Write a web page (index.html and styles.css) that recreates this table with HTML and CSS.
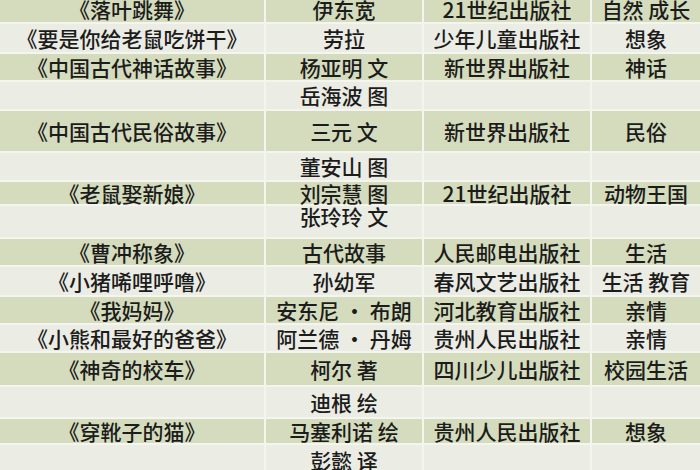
FILE: index.html
```html
<!DOCTYPE html>
<html lang="zh">
<head>
<meta charset="utf-8">
<title>绘本书单</title>
<link rel="stylesheet" href="styles.css">
</head>
<body>
<div class="sheet">
  <div class="row dark"><div class="c">《落叶跳舞》</div><div class="c">伊东宽</div><div class="c">21世纪出版社</div><div class="c">自然 成长</div></div>
  <div class="row light"><div class="c">《要是你给老鼠吃饼干》</div><div class="c">劳拉</div><div class="c">少年儿童出版社</div><div class="c">想象</div></div>
  <div class="row dark"><div class="c">《中国古代神话故事》</div><div class="c">杨亚明 文</div><div class="c">新世界出版社</div><div class="c">神话</div></div>
  <div class="row light"><div class="c"></div><div class="c">岳海波 图</div><div class="c"></div><div class="c"></div></div>
  <div class="row dark"><div class="c">《中国古代民俗故事》</div><div class="c">三元 文</div><div class="c">新世界出版社</div><div class="c">民俗</div></div>
  <div class="row light"><div class="c"></div><div class="c">董安山 图</div><div class="c"></div><div class="c"></div></div>
  <div class="row dark"><div class="c">《老鼠娶新娘》</div><div class="c">刘宗慧 图</div><div class="c">21世纪出版社</div><div class="c">动物王国</div></div>
  <div class="row light raised"><div class="c"></div><div class="c">张玲玲 文</div><div class="c"></div><div class="c"></div></div>
  <div class="row dark"><div class="c">《曹冲称象》</div><div class="c">古代故事</div><div class="c">人民邮电出版社</div><div class="c">生活</div></div>
  <div class="row light"><div class="c">《小猪唏哩呼噜》</div><div class="c">孙幼军</div><div class="c">春风文艺出版社</div><div class="c">生活 教育</div></div>
  <div class="row dark"><div class="c">《我妈妈》</div><div class="c">安东尼 · 布朗</div><div class="c">河北教育出版社</div><div class="c">亲情</div></div>
  <div class="row light"><div class="c">《小熊和最好的爸爸》</div><div class="c">阿兰德 · 丹姆</div><div class="c">贵州人民出版社</div><div class="c">亲情</div></div>
  <div class="row dark"><div class="c">《神奇的校车》</div><div class="c">柯尔 著</div><div class="c">四川少儿出版社</div><div class="c">校园生活</div></div>
  <div class="row light"><div class="c"></div><div class="c">迪根 绘</div><div class="c"></div><div class="c"></div></div>
  <div class="row dark"><div class="c">《穿靴子的猫》</div><div class="c">马塞利诺 绘</div><div class="c">贵州人民出版社</div><div class="c">想象</div></div>
  <div class="row light"><div class="c"></div><div class="c">彭懿 译</div><div class="c"></div><div class="c"></div></div>
</div>
</body>
</html>
```
FILE: styles.css
```css
html, body {
  margin: 0;
  padding: 0;
  background: #f5f5ef;
  overflow: hidden;
}

.sheet {
  margin-top: -4px;
  display: grid;
  grid-template-rows: 26px 28px 26px 27px 40px 27px 22px 31px 26px 28px 26px 26px 32px 30px 24px 30px;
  row-gap: 2px;
  font-family: "Noto Sans CJK SC", "Noto Sans", sans-serif;
  font-size: 21px;
  font-weight: 500;
  color: #1c1c1c;
}

.row {
  display: grid;
  grid-template-columns: 264px 156px 166px 108px;
  column-gap: 2px;
}

.c {
  display: flex;
  align-items: center;
  justify-content: center;
  line-height: 1;
  white-space: nowrap;
}

.dark .c { background: #d5dcbd; }
.light .c { background: #ebece4; }

.raised .c { padding-bottom: 10px; }
```
